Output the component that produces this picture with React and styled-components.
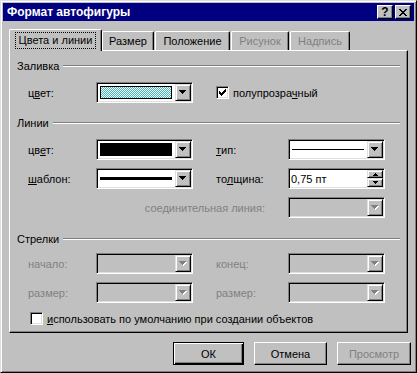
import React from 'react';
import styled, { createGlobalStyle } from 'styled-components';

const GlobalStyle = createGlobalStyle`
  html, body {
    margin: 0;
    padding: 0;
    background: #c0c0c0;
  }
  body {
    font-family: "Liberation Sans", Arial, sans-serif;
    font-size: 11px;
    color: #000;
  }
`;

const Window = styled.div`
  box-sizing: border-box;
  width: 417px;
  height: 373px;
  background: #c0c0c0;
  border: 1px solid;
  border-color: #dfdfdf #000 #000 #dfdfdf;
  box-shadow: inset 1px 1px #fff, inset -1px -1px #808080;
  padding: 2px;
  display: flex;
  flex-direction: column;
`;

const TitleBar = styled.div`
  height: 18px;
  flex-shrink: 0;
  background: #000080;
  color: #fff;
  display: flex;
  align-items: center;
  padding: 0 3px 0 4px;
`;

const Title = styled.div`
  flex: 1;
  font-weight: bold;
  font-size: 12px;
`;

const CapButton = styled.div`
  box-sizing: border-box;
  width: 16px;
  height: 14px;
  margin-left: ${p => p.$gap || 0}px;
  background: #c0c0c0;
  border: 1px solid;
  border-color: #fff #000 #000 #fff;
  box-shadow: inset -1px -1px #808080;
  display: flex;
  align-items: center;
  justify-content: center;
  color: #000;
  font-weight: bold;
  font-size: 12px;
  line-height: 1;
`;

const Body = styled.div`
  flex: 1;
  display: flex;
  flex-direction: column;
  padding: 8px 6px 5px 6px;
`;

const TabRow = styled.div`
  display: flex;
  align-items: flex-end;
  height: 21px;
  position: relative;
  z-index: 1;
`;

const Tab = styled.div`
  box-sizing: border-box;
  width: ${p => p.$w}px;
  height: ${p => (p.$active ? 22 : 19)}px;
  margin-bottom: ${p => (p.$active ? -1 : 0)}px;
  margin-left: ${p => p.$ml || 0}px;
  background: #c0c0c0;
  border-top: 1px solid #fff;
  border-left: 1px solid #fff;
  border-right: 1px solid #000;
  border-radius: 2px 2px 0 0;
  box-shadow: inset -1px 0 #808080;
  color: ${p => (p.$disabled ? '#808080' : '#000')};
  display: flex;
  justify-content: center;
  padding-top: ${p => (p.$active ? 3 : 2)}px;
`;

const Focus = styled.span`
  outline: 1px dotted #000;
  outline-offset: 0;
  padding: 1px 3px 1px 3px;
  height: 13px;
  line-height: 13px;
`;

const TabText = styled.span`
  line-height: 13px;
  padding-top: 1px;
`;

const Panel = styled.div`
  box-sizing: border-box;
  height: 283px;
  border: 1px solid;
  border-color: #fff #000 #000 #fff;
  box-shadow: inset -1px -1px #808080;
  padding: 8px 7px 0 7px;
`;

const Head = styled.div`
  display: flex;
  align-items: center;
  height: 13px;
  margin-top: ${p => p.$top || 0}px;
  &::after {
    content: '';
    flex: 1;
    margin-left: 4px;
    border-top: 1px solid #808080;
    border-bottom: 1px solid #fff;
  }
`;

const Rows = styled.div`
  display: grid;
  grid-template-columns: 68px 97px 23px 72px 97px;
  grid-auto-rows: 21px;
  row-gap: 8px;
  align-items: center;
  margin: ${p => p.$top}px 0 0 11px;
`;

const Label = styled.div`
  grid-column: ${p => p.$col};
  color: ${p => (p.$disabled ? '#808080' : '#000')};
  white-space: nowrap;
`;

const WideLabel = styled(Label)`
  justify-self: end;
  margin-right: 23px;
`;

const Field = styled.div`
  grid-column: ${p => p.$col};
  box-sizing: border-box;
  width: 97px;
  height: 21px;
  display: flex;
  padding: 1px;
  background: ${p => (p.$disabled ? '#c0c0c0' : '#fff')};
  border: 1px solid;
  border-color: #808080 #fff #fff #808080;
  box-shadow: inset 1px 1px #000, inset -1px -1px #dfdfdf;
`;

const Value = styled.div`
  flex: 1;
  display: flex;
  align-items: center;
  padding: 0 2px;
`;

const Swatch = styled.div`
  flex: 1;
  align-self: stretch;
  margin: 2px 1px 2px 0;
  border: 1px solid #000;
  background: ${p => p.$bg};
  background-size: 2px 2px;
`;

const Stroke = styled.div`
  flex: 1;
  height: ${p => p.$h}px;
  background: #000;
  margin-right: 1px;
`;

const NumText = styled.div`
  flex: 1;
  display: flex;
  align-items: center;
  padding-left: 1px;
`;

const RaisedBtn = styled.div`
  box-sizing: border-box;
  width: 16px;
  height: ${p => p.$h || 17}px;
  background: #c0c0c0;
  border: 1px solid;
  border-color: #dfdfdf #000 #000 #dfdfdf;
  box-shadow: inset 1px 1px #fff, inset -1px -1px #808080;
  display: flex;
  align-items: center;
  justify-content: center;
`;

const SpinCol = styled.div`
  display: flex;
  flex-direction: column;
`;

const CheckRow = styled.label`
  grid-column: ${p => p.$col || 'auto'};
  display: flex;
  align-items: center;
  gap: 4px;
  margin: ${p => p.$margin || 0};
  white-space: nowrap;
`;

const CheckBox = styled.div`
  box-sizing: border-box;
  width: 13px;
  height: 13px;
  background: #fff;
  border: 1px solid;
  border-color: #808080 #fff #fff #808080;
  box-shadow: inset 1px 1px #000, inset -1px -1px #dfdfdf;
  display: flex;
  align-items: center;
  justify-content: center;
`;

const Acc = styled.span`
  text-decoration: underline;
  text-underline-offset: 1px;
`;

const ButtonRow = styled.div`
  display: flex;
  justify-content: flex-end;
  gap: 10px;
  margin: 9px -3px 0 0;
`;

const PushButton = styled.div`
  box-sizing: border-box;
  width: ${p => p.$w}px;
  height: 23px;
  background: #c0c0c0;
  color: ${p => (p.$disabled ? '#808080' : '#000')};
  display: flex;
  align-items: center;
  justify-content: center;
  border: 1px solid;
  border-color: ${p => (p.$default ? '#000' : '#fff #000 #000 #fff')};
  box-shadow: ${p =>
    p.$default
      ? 'inset 1px 1px #fff, inset -1px -1px #000, inset -2px -2px #808080'
      : 'inset -1px -1px #808080'};
`;

const Arrow = ({ disabled, up, down }) => {
  const fill = disabled ? '#808080' : '#000';
  const d = 'M0 0h7v1h-1v1h-1v1h-1v1h-1v-1h-1v-1h-1v-1h-1z';
  if (up || down) {
    const p = down ? 'M0 0h5v1h-1v1h-1v1h-1v-1h-1v-1h-1z' : 'M2 0h1v1h1v1h1v1h-5v-1h1v-1h1z';
    return (
      <svg width="5" height="3" shapeRendering="crispEdges">
        <path d={p} fill="#000" />
      </svg>
    );
  }
  return (
    <svg width="8" height="5" shapeRendering="crispEdges">
      {disabled && <path d={d} fill="#fff" transform="translate(1,1)" />}
      <path d={d} fill={fill} />
    </svg>
  );
};

const Combo = ({ col, disabled, children }) => (
  <Field $col={col} $disabled={disabled}>
    <Value>{children}</Value>
    <RaisedBtn>
      <Arrow disabled={disabled} />
    </RaisedBtn>
  </Field>
);

const Check = () => (
  <svg width="7" height="7" shapeRendering="crispEdges">
    <path
      d="M6 0h1v3h-1v1h-1v1h-1v1h-1v1h-1v-1h-1v-1h-1v-3h1v1h1v1h1v-1h1v-1h1z"
      fill="#000"
    />
  </svg>
);

const dither =
  'repeating-conic-gradient(#3fbfbf 0 25%, #ffffff 0 50%)';

export default function App() {
  return (
    <>
      <GlobalStyle />
      <Window>
        <TitleBar>
          <Title>Формат автофигуры</Title>
          <CapButton>?</CapButton>
          <CapButton $gap={2}>
            <svg width="8" height="7" shapeRendering="crispEdges">
              <path
                d="M0 0h2v1h1v1h2v-1h1v-1h2v1h-1v1h-1v1h-1v1h1v1h1v1h1v1h-2v-1h-1v-1h-2v1h-1v1h-2v-1h1v-1h1v-1h1v-1h-1v-1h-1v-1h-1z"
                fill="#000"
              />
            </svg>
          </CapButton>
        </TitleBar>
        <Body>
          <TabRow>
            <Tab $w={93} $active>
              <Focus>Цвета и линии</Focus>
            </Tab>
            <Tab $w={52}>
              <TabText>Размер</TabText>
            </Tab>
            <Tab $w={75} $ml={1}>
              <TabText>Положение</TabText>
            </Tab>
            <Tab $w={58} $ml={1} $disabled>
              <TabText>Рисунок</TabText>
            </Tab>
            <Tab $w={60} $ml={1} $disabled>
              <TabText>Надпись</TabText>
            </Tab>
          </TabRow>
          <Panel>
            <Head>Заливка</Head>
            <Rows $top={10}>
              <Label $col={1}>
                ц<Acc>в</Acc>ет:
              </Label>
              <Combo col={2}>
                <Swatch $bg={dither} />
              </Combo>
              <CheckRow $col="4 / 6">
                <CheckBox>
                  <Check />
                </CheckBox>
                <span>
                  полупрозра<Acc>ч</Acc>ный
                </span>
              </CheckRow>
            </Rows>

            <Head $top={13}>Линии</Head>
            <Rows $top={10}>
              <Label $col={1}>
                цв<Acc>е</Acc>т:
              </Label>
              <Combo col={2}>
                <Swatch $bg="#000" />
              </Combo>
              <Label $col={4}>
                <Acc>т</Acc>ип:
              </Label>
              <Combo col={5}>
                <Stroke $h={1} />
              </Combo>

              <Label $col={1}>
                <Acc>ш</Acc>аблон:
              </Label>
              <Combo col={2}>
                <Stroke $h={3} />
              </Combo>
              <Label $col={4}>
                то<Acc>л</Acc>щина:
              </Label>
              <Field $col={5}>
                <NumText>0,75 пт</NumText>
                <SpinCol>
                  <RaisedBtn $h={8}>
                    <Arrow up />
                  </RaisedBtn>
                  <RaisedBtn $h={9}>
                    <Arrow down />
                  </RaisedBtn>
                </SpinCol>
              </Field>

              <WideLabel $col="1 / 5" $disabled>
                соединительная линия:
              </WideLabel>
              <Combo col={5} disabled />
            </Rows>

            <Head $top={14}>Стрелки</Head>
            <Rows $top={8}>
              <Label $col={1} $disabled>
                начало:
              </Label>
              <Combo col={2} disabled />
              <Label $col={4} $disabled>
                конец:
              </Label>
              <Combo col={5} disabled />
              <Label $col={1} $disabled>
                размер:
              </Label>
              <Combo col={2} disabled />
              <Label $col={4} $disabled>
                размер:
              </Label>
              <Combo col={5} disabled />
            </Rows>
            <CheckRow $margin="9px 0 0 13px">
              <CheckBox />
              <span>
                <Acc>и</Acc>спользовать по умолчанию при создании объектов
              </span>
            </CheckRow>
          </Panel>
          <ButtonRow>
            <PushButton $w={71} $default>
              ОК
            </PushButton>
            <PushButton $w={73}>Отмена</PushButton>
            <PushButton $w={74} $disabled>
              Просмотр
            </PushButton>
          </ButtonRow>
        </Body>
      </Window>
    </>
  );
}
